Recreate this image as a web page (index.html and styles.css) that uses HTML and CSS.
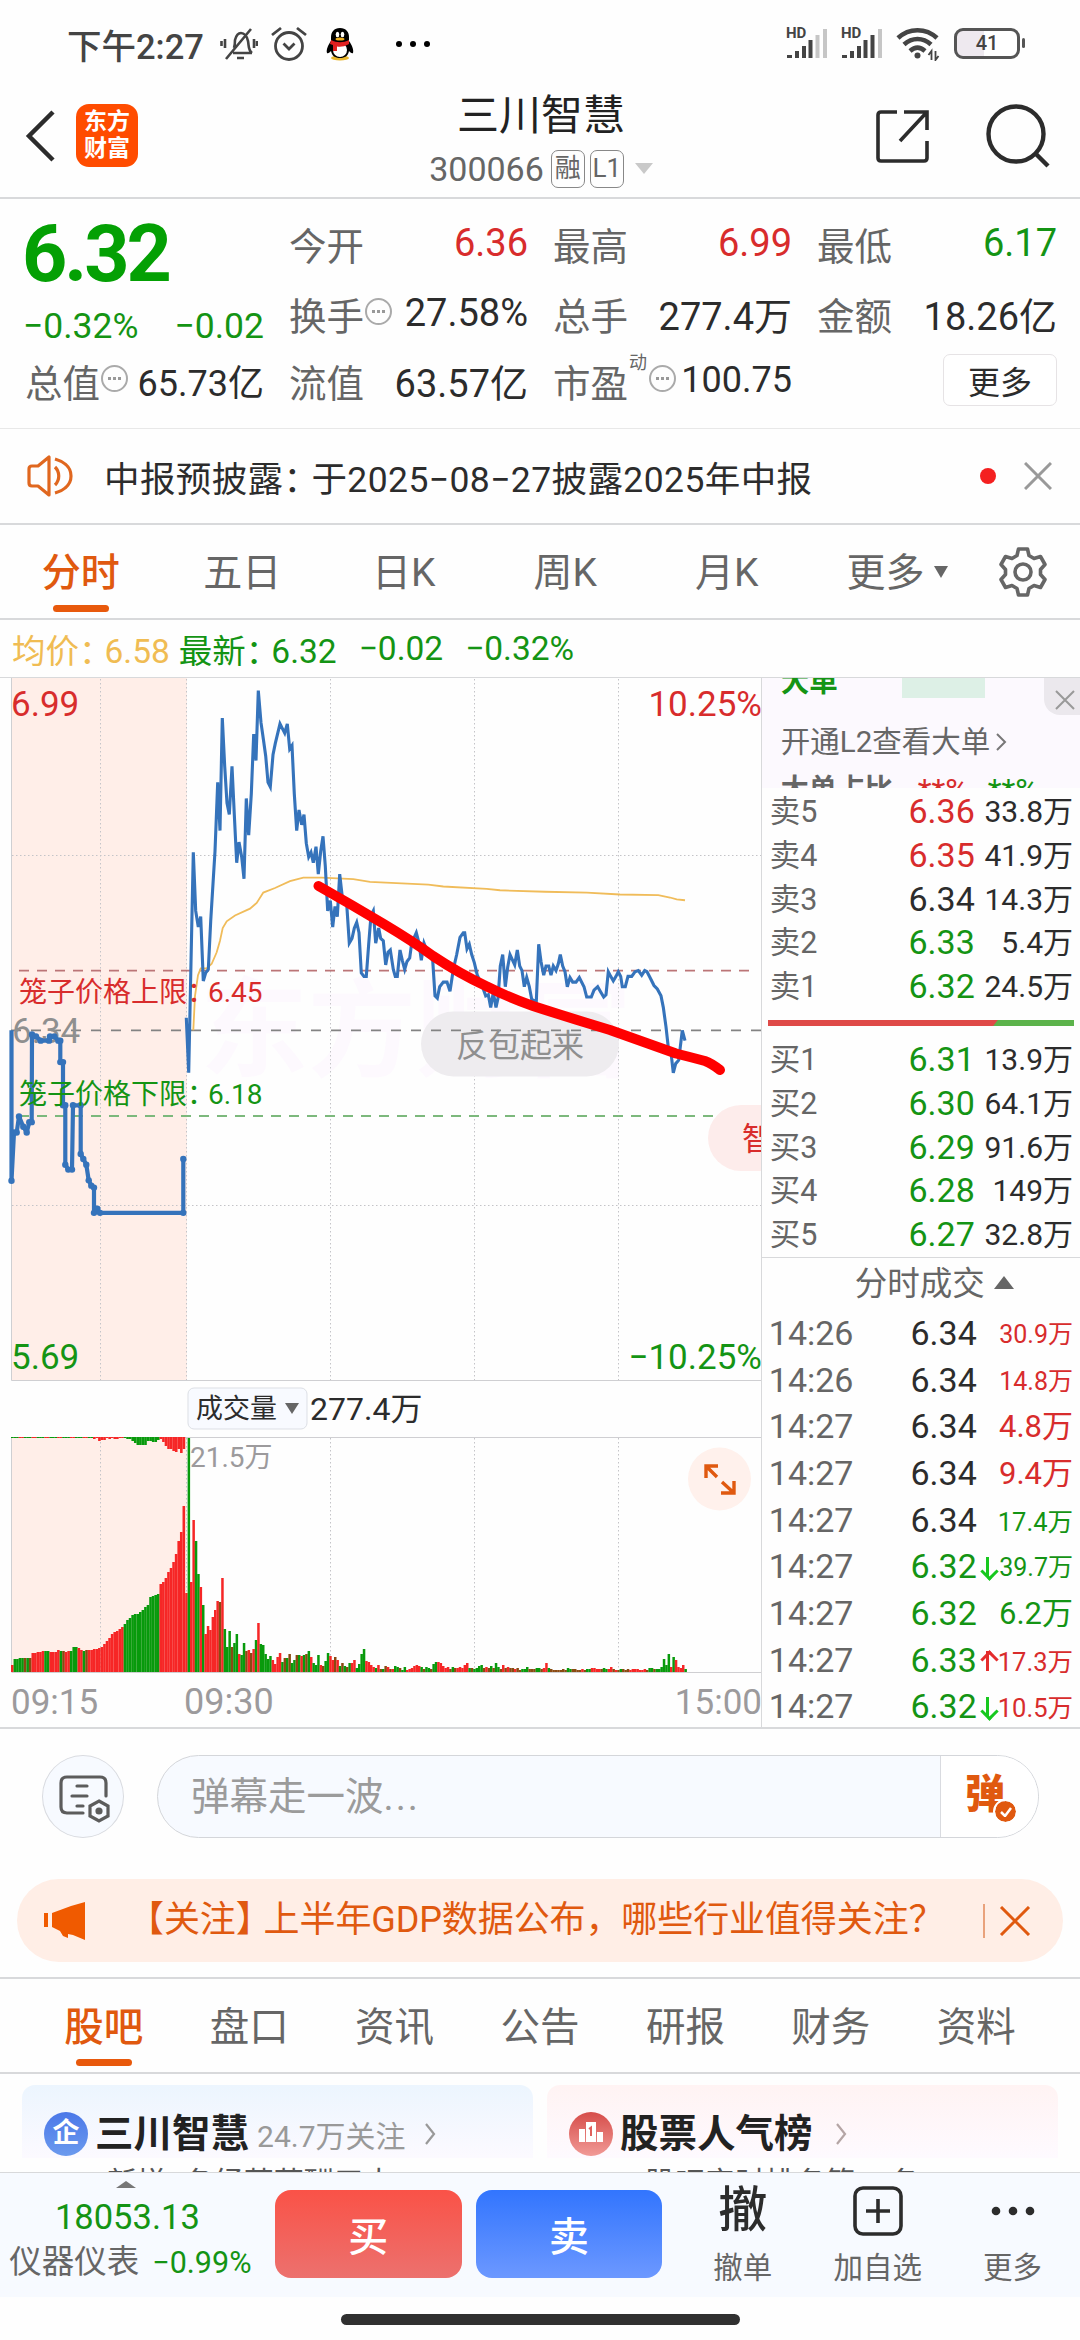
FILE: index.html
```html
<!DOCTYPE html>
<html lang="zh-CN">
<head>
<meta charset="utf-8">
<title>三川智慧 300066</title>
<link rel="stylesheet" href="styles.css">
</head>
<body>

<div class="status">
<span class="time">下午2:27</span>
<svg class="bell" width="38" height="36" viewBox="0 0 38 36" fill="none" stroke="#444" stroke-width="2.6"><path d="M13 27h19M14 22c1-3 1-5 1-8 1-4 3-7 6-7s6 3 7 8c1 5 0 9 4 12M31 3 6 33M5 13v9M1.500 15v5M34 13v9M37 15v5M17 32h7"/></svg>
<svg class="alarm" width="38" height="36" viewBox="0 0 38 36" fill="none" stroke="#444" stroke-width="2.800"><circle cx="19" cy="20" r="13.500"/><path d="M13.500 17.500 19 23l5.500-5.500M2 9l9-7M36 9l-9-7"/></svg>
<svg class="qq" width="28" height="34" viewBox="0 0 28 34"><ellipse cx="14" cy="31" rx="9" ry="2.500" fill="#e8b62d"/><path d="M14 1c-6 0-9 4-9 9v4c-3 4-5 9-4 12 1 1 3-1 4-2 1 5 4 7 9 7s8-2 9-7c1 1 3 3 4 2 1-3-1-8-4-12v-4c0-5-3-9-9-9z" fill="#000"/><ellipse cx="14" cy="23" rx="7" ry="7" fill="#fff"/><path d="M5 13c6 3 12 3 18 0v4c-5 3-9 3-12 2.500V24H7v-6l-3-1z" fill="#e02020"/><ellipse cx="11.500" cy="7.500" rx="1.800" ry="2.700" fill="#fff"/><ellipse cx="16.500" cy="7.500" rx="1.800" ry="2.700" fill="#fff"/><ellipse cx="14" cy="12" rx="4.500" ry="1.600" fill="#f0b020"/></svg>
<svg class="dots" width="36" height="8" viewBox="0 0 36 8"><circle cx="4" cy="4" r="3"/><circle cx="18" cy="4" r="3"/><circle cx="32" cy="4" r="3"/></svg>
<svg class="signal" width="44" height="34" viewBox="0 0 44 34"><text x="0" y="11" class="hd">HD</text><path d="M1 31v-3h5v3zM9 31v-7h4v7zM16 31V19h4v12zM22.500 31V13h4v18z" fill="#444"/><path d="M29.500 31V8h4v23zM37 31V2h4v29z" fill="#c6c6c6"/></svg>
<svg class="signal" width="44" height="34" viewBox="0 0 44 34"><text x="0" y="11" class="hd">HD</text><path d="M1 31v-3h5v3zM9 31v-7h4v7zM16 31V19h4v12zM22.500 31V13h4v18zM29.500 31V8h4v23z" fill="#444"/><path d="M37 31V2h4v29z" fill="#c6c6c6"/></svg>
<svg class="wifi" width="44" height="34" viewBox="0 0 44 34" fill="none" stroke="#444" stroke-width="4.500"><path d="M2 11c11-10.500 28-10.500 39 0M8 17.500c8-7.500 19-7.500 27 0M14 24c5-4.500 10-4.500 15 0"/><circle cx="21.500" cy="28.500" r="3" fill="#444" stroke="none"/><path d="M35.500 33v-9l-3 4M39.500 24v9l3-4" stroke-width="1.800"/></svg>
<div class="battery"><i></i><b>41</b></div>
</div>

<div class="header">
<svg class="back" width="32" height="54" viewBox="0 0 32 54" fill="none" stroke="#2c2c2c" stroke-width="4.500"><path d="M28 3 4 27l24 24"/></svg>
<div class="logo">东方<br>财富</div>
<div class="name">
<h1>三川智慧</h1>
<p><span>300066</span><em class="rong">融</em><em class="lv">L1</em><svg width="18" height="11" viewBox="0 0 18 11"><path d="M0 0h18l-9 11z" fill="#c9c9c9"/></svg></p>
</div>
<svg class="share" width="56" height="56" viewBox="0 0 56 56" fill="none" stroke="#2c2c2c" stroke-width="3.600"><path d="M22 4H6q-3 0-3 3v43q0 3 3 3h43q3 0 3-3V33M29 4h23v18M52 4 25 33"/></svg>
<svg class="search" width="64" height="64" viewBox="0 0 64 64" fill="none" stroke="#2c2c2c" stroke-width="4.400"><circle cx="30" cy="30" r="27.500"/><path d="m49 49 13 13"/></svg>
</div>

<div class="quote">
<div class="price">
<div class="big">6.32</div>
<div class="chg"><span>−0.32%</span><span>−0.02</span></div>
</div>
<div class="cell"><label>今开</label><b class="red">6.36</b></div>
<div class="cell"><label>最高</label><b class="red">6.99</b></div>
<div class="cell"><label>最低</label><b class="green">6.17</b></div>
<div class="cell"><label>换手</label><i class="tip"></i><b>27.58%</b></div>
<div class="cell"><label>总手</label><b>277.4万</b></div>
<div class="cell"><label>金额</label><b>18.26亿</b></div>
<div class="cell small"><label>总值</label><i class="tip"></i><b>65.73亿</b></div>
<div class="cell"><label>流值</label><b>63.57亿</b></div>
<div class="cell small"><label>市盈</label><sup>动</sup><i class="tip"></i><b>100.75</b></div>
<div class="cell"><button class="more">更多</button></div>
</div>

<div class="notice">
<svg width="48" height="44" viewBox="0 0 48 44" fill="none" stroke="#e0671f" stroke-width="3.200" stroke-linejoin="round"><path d="M22 3v38L11 32H5q-3 0-3-3V15q0-3 3-3h6zM28 13c5 5 5 13 0 18"/><path d="M28 5c7 2 16 7 16 17s-9 15-16 17" /></svg>
<span class="text">中报预披露<s>：</s>于2025−08−27披露2025年中报</span>
<i class="dot"></i>
<svg width="28" height="28" viewBox="0 0 28 28" fill="none" stroke="#999" stroke-width="3"><path d="m1 1 26 26M27 1 1 27"/></svg>
</div>

<div class="tabs">
<a class="on">分时</a><a>五日</a><a>日K</a><a>周K</a><a>月K</a>
<a class="drop">更多<svg width="14" height="12" viewBox="0 0 14 12"><path d="M0 0h14L7 12z" fill="#666"/></svg></a>
<svg class="gear" width="50" height="50" viewBox="0 0 50 50" fill="none" stroke="#666" stroke-width="3.600" stroke-linejoin="round"><path d="M20.500 2h9l1.500 6.500 5 3 6.500-2 4.500 8-4.500 5v5l4.500 5-4.500 8-6.500-2-5 3-1.500 6.500h-9L19 41.500l-5-3-6.500 2-4.500-8 4.500-5v-5l-4.500-5 4.500-8 6.500 2 5-3z"/><circle cx="25" cy="25" r="8"/></svg>
</div>

<div class="legend"><span class="avg">均价<s>：</s>6.58</span><span>最新<s>：</s>6.32</span><span>−0.02</span><span>−0.32%</span></div>

<div class="main">
<div class="chart">
<svg width="763" height="1051" viewBox="0 677 763 1051">
<rect x="11" y="677" width="176" height="702" fill="#ffeee8"/>
<rect x="11" y="1437" width="176" height="234" fill="#ffeee8"/>
<text class="water" x="200" y="1067">东方财富</text>
<g class="grid">
<path d="M100.500 678v701M186.500 678v701M330.500 678v701M474.500 678v701M618.500 678v701M12 854.500h750M12 1204.500h750"/>
<path d="M100.500 1437v234M186.500 1437v234M330.500 1437v234M474.500 1437v234M618.500 1437v234"/>
</g>
<path class="frame" d="M11.500 677v702.500H762M11.500 1671V1436.500H762M11.500 1671.500H762"/>
<rect x="421" y="1010.500" width="198" height="65" rx="32.500" fill="#eeecef"/>
<path class="up" d="M19 969.600h731"/>
<path class="down" d="M19 1115h731"/>
<path class="mid" d="M11 1029.300h751"/>
<text class="g30" x="456" y="1056" font-size="32">反包起来</text>
<rect x="708" y="1104" width="120" height="66" rx="33" fill="#fdeceb"/>
<text class="r" x="742" y="1149" font-size="32">智</text>
<text class="g30" x="12" y="1042" font-size="35">6.34</text>

<g transform="translate(0 -99.160) scale(1 1.148)">
<polyline class="line avgline" points="193.300,983 195,953 198,935 200.700,929 206.700,929 211.700,925 216.700,915 220,905 222.700,894 226.700,888 235,883 250,877 256.700,872 263.300,863 275,859 290,853 303.300,850 321.700,850 353.300,851.300 370,853.700 428.300,856 443.300,857.700 486.700,859.700 500,861 545,862.300 586.700,863 620,864.700 658.300,865.300 670,867.300 676.700,869 685,869.700"/>
<polyline class="line" points="186.300,972 188.700,1020 193.300,828 195.700,879 198.300,893 200.700,884 203.300,940 205.700,933 208.300,930 210.700,888 215,827 217.700,767 220,809 222.300,711 224.700,753 227,785 229.300,795 232,753 234.300,795 236.700,837 239,819 241.700,832 244,851 246.300,781 248.700,813 251.300,777 253.700,725 256,748 258.300,687 261,715 263.300,729 265.700,744 268,767 270.300,771 273,743 275.300,733 280,716 282.300,720 284.700,724 287.300,716 289.700,738 292,735 294.300,777 296.700,809 299,791 301.700,804 304,795 306.300,820 308.700,832 311,828 313.300,837 316,823 318.300,847 320.700,827 323,814 325.300,840 327.700,879 330.300,870 332.700,893 335,875 337.300,884 339.700,847 342.300,867 346.700,873 349.300,907 352,903 354.300,894 356.700,889 359,898 361.300,933 364,936 366.300,936 368.700,908 371,883 373.300,879 375.700,907 378.700,894 380.700,903 383.300,905 385.700,926 388,915 390.300,913 393.300,930 395.300,936 397.300,936 400,913 402.300,922 404.700,930 407,923 409.700,920 411.700,907 416.300,898 419,907 421.300,922 424,907 426.700,913 432.700,922 435,953 437.300,955 439.700,945 443.300,941 447,941 450,949 453.300,930 456.700,917 460,902 463.300,898 464.700,898 467,912 469.300,908 471.700,917 474.300,924 477.300,935 481.700,943 485.700,953 488.300,952 490.700,963 493.300,950 496,963 498,955 500.300,927 502.700,917 505.300,945 507.700,928 510,917 514.700,926 517.300,913 519.700,927 522,931 524.300,945 526.700,937 529.300,945 531.700,956 536.300,958 538.700,908 541,923 543.700,935 546,927 548.700,927 551,935 553.300,927 556,931 558.300,925 560.300,917 562.700,927 565,932 567.300,945 570,937 572.700,941 576,941 579.300,937 584,945 586.700,954 591.300,954 594,948 597.700,945 601,950 603.700,954 606,952 608.300,932 610.700,936 613.300,940 616,936 618.300,932 620.700,936 622.300,945 625.300,945 628,936 631.700,936 635,932 638.300,931 641.700,935 644.700,931 647,932 650,937 654,944 657.300,947 661,953 663.300,963 666,980 668.300,998 670.700,1000 673.300,1020 675.700,1012 678.700,1009 682.300,983 685,992"/>
<polyline class="line pre" points="11.500,983 11.500,1114 14,1072 16.700,1072 19,1058 23.300,1067 26.700,1072 29.300,1063 31.700,1063 32,986.700 36,988.300 40.700,992 49,992 50,988.300 54.300,988.300 58.300,992 60.300,992 60.300,1010.700 63,1010.700 63,1048.300 65.300,1048.300 65.300,1100 68.300,1104.300 72,1104.300 73,1048.300 80.700,1048.300 80.700,1090.700 83.300,1095 86.300,1100 88.700,1113.700 91.300,1118.300 94,1120 94,1142 97.300,1138.300 100,1142 183.300,1142 183.300,1095"/>
</g>
<g id="dots"></g>
<path d="M318.500 885Q352 904 383 922.500T433 955Q460 973 487 985.500Q510 997 533 1005Q570 1017 610 1029L676 1052.500Q690 1056 705 1060Q711 1062 720 1069" fill="none" stroke="#f00" stroke-width="10" stroke-linecap="round" stroke-linejoin="round"/>

<text class="r" x="11" y="715" font-size="35">6.99</text>
<text class="r end" x="762" y="715" font-size="35">10.25%</text>
<text class="gr" x="11" y="1368" font-size="35">5.69</text>
<text class="gr end" x="762" y="1368" font-size="35">−10.25%</text>
<text class="r" x="19" y="1001" font-size="28">笼子价格上限：<tspan x="208">6.45</tspan></text>
<text class="gr" x="19" y="1103" font-size="28">笼子价格下限：<tspan x="208">6.18</tspan></text>

<rect x="188" y="1387" width="119" height="41" rx="6" fill="#f8faff" stroke="#dcdfe5"/>
<text class="dk" x="196" y="1417" font-size="27">成交量</text>
<path d="M285 1402h14l-7 11z" fill="#666"/>
<text class="dk" x="310" y="1419" font-size="32">277.4万</text>

<g id="bars"></g>
<text class="g20" x="190" y="1466" font-size="28">21.5万</text>
<circle cx="719.500" cy="1478" r="31.500" fill="#fff1ec"/>
<path d="M706 1477v-12h12M706 1465l11 11M734 1480v12h-13M734 1492l-12-11" fill="none" stroke="#e0590f" stroke-width="3.400"/>
<text class="g20" x="11" y="1713" font-size="35">09:15</text>
<text class="g20" x="184" y="1713" font-size="36">09:30</text>
<text class="g20 end" x="762" y="1713" font-size="35">15:00</text>
</svg>
</div>

<div class="side">
<div class="l2">
<div class="l2-top"><b>大单</b><i></i></div>
<div class="l2-open">开通L2查看大单<svg width="11" height="18" viewBox="0 0 11 18" fill="none" stroke="#777" stroke-width="2"><path d="m1 1 8 8-8 8"/></svg></div>
<div class="l2-pct"><b>大单占比</b><span class="red">**%</span><span class="green">**%</span></div>
<div class="l2-x"><svg width="20" height="20" viewBox="0 0 20 20" fill="none" stroke="#999" stroke-width="2"><path d="m1 1 18 18M19 1 1 19"/></svg></div>
</div>
<ul class="book">
<li><span>卖5</span><b class="red">6.36</b><em>33.8万</em></li>
<li><span>卖4</span><b class="red">6.35</b><em>41.9万</em></li>
<li><span>卖3</span><b>6.34</b><em>14.3万</em></li>
<li><span>卖2</span><b class="green">6.33</b><em>5.4万</em></li>
<li><span>卖1</span><b class="green">6.32</b><em>24.5万</em></li>
</ul>
<div class="ratio"><i></i></div>
<ul class="book buys">
<li><span>买1</span><b class="green">6.31</b><em>13.9万</em></li>
<li><span>买2</span><b class="green">6.30</b><em>64.1万</em></li>
<li><span>买3</span><b class="green">6.29</b><em>91.6万</em></li>
<li><span>买4</span><b class="green">6.28</b><em>149万</em></li>
<li><span>买5</span><b class="green">6.27</b><em>32.8万</em></li>
</ul>
<div class="deals-title">分时成交<svg width="20" height="13" viewBox="0 0 20 13"><path d="M10 0 20 13H0z" fill="#666"/></svg></div>
<ul class="deals">
<li><span>14:26</span><b>6.34</b><i></i><em class="red">30.9万</em></li>
<li><span>14:26</span><b>6.34</b><i></i><em class="red">14.8万</em></li>
<li><span>14:27</span><b>6.34</b><i></i><em class="red l">4.8万</em></li>
<li><span>14:27</span><b>6.34</b><i></i><em class="red l">9.4万</em></li>
<li><span>14:27</span><b>6.34</b><i></i><em class="green m">17.4万</em></li>
<li><span>14:27</span><b class="green">6.32</b><i class="dn"></i><em class="green">39.7万</em></li>
<li><span>14:27</span><b class="green">6.32</b><i></i><em class="green l">6.2万</em></li>
<li><span>14:27</span><b class="green">6.33</b><i class="upw"></i><em class="red m">17.3万</em></li>
<li><span>14:27</span><b class="green">6.32</b><i class="dn"></i><em class="red m">10.5万</em></li>
</ul>
</div>
</div>

<div class="danmu">
<div class="set"><svg width="52" height="50" viewBox="0 0 52 50" fill="none" stroke="#5c5c5c" stroke-width="3.200" stroke-linecap="round"><path d="M25 39H9q-6 0-6-6V9q0-6 6-6h33q6 0 6 6v13M19 12h10M14 22h15M19 32h6"/><path d="m41 27 9 5v10l-9 5-9-5V32z"/><circle cx="41" cy="37" r="2" fill="#5c5c5c"/></svg></div>
<div class="input"><span>弹幕走一波<q>...</q></span><div class="send">弹<i><svg width="12" height="10" viewBox="0 0 12 10" fill="none" stroke="#fff" stroke-width="2.500"><path d="m1 5 4 4 6-8"/></svg></i></div></div>
</div>

<div class="banner">
<svg width="44" height="38" viewBox="0 0 44 38" fill="#f05a00"><path d="M0 11h4v14H0zM8 11l19-7 14-4v38l-12-5-5-1v4l-5-2-3-5-8-4z"/></svg>
<span>【关注<s>】</s>上半年GDP数据公布，哪些行业值得关注？</span>
<i></i>
<svg class="x" width="32" height="30" viewBox="0 0 32 30" fill="none" stroke="#e0590f" stroke-width="3"><path d="m2 1 28 28M30 1 2 29"/></svg>
</div>

<div class="tabs2"><a class="on">股吧</a><a>盘口</a><a>资讯</a><a>公告</a><a>研报</a><a>财务</a><a>资料</a></div>

<div class="cards">
<div class="card blue">
<div class="hd-row"><span class="ico">企</span><b>三川智慧</b><small>24.7万关注</small><svg width="12" height="22" viewBox="0 0 12 22" fill="none" stroke="#999" stroke-width="2.200"><path d="m2 1 8 10-8 10"/></svg></div>
<p>新增<u>1</u>条经营薪酬三大</p>
</div>
<div class="card pink">
<div class="hd-row"><span class="ico"><svg width="26" height="24" viewBox="0 0 26 24"><path d="M1 9h6v13H1zM8 2h10v20H8zM19 12h6v10h-6z" fill="#fff"/><path d="M11 9l2-1.500V16" stroke="#e0605c" stroke-width="2" fill="none"/></svg></span><b>股票人气榜</b><svg class="far" width="12" height="22" viewBox="0 0 12 22" fill="none" stroke="#b5a5a5" stroke-width="2.200"><path d="m2 1 8 10-8 10"/></svg></div>
<p class="in">股吧实时排名第<u>13</u>名</p>
</div>
</div>

<div class="bottom">
<div class="index">
<svg width="20" height="7" viewBox="0 0 20 7"><path d="M10 0 20 7H0z" fill="#777"/></svg>
<b>18053.13</b>
<p>仪器仪表<span>−0.99%</span></p>
</div>
<button class="buy">买</button>
<button class="sell">卖</button>
<div class="act first"><strong>撤</strong><span>撤单</span></div>
<div class="act"><strong><svg width="50" height="50" viewBox="0 0 50 50" fill="none" stroke="#2c2c2c" stroke-width="3.600"><rect x="2" y="2" width="46" height="46" rx="8"/><path d="M25 13v24M13 25h24"/></svg></strong><span>加自选</span></div>
<div class="act last"><strong><svg width="44" height="10" viewBox="0 0 44 10" fill="#2c2c2c"><circle cx="5" cy="5" r="4.300"/><circle cx="22" cy="5" r="4.300"/><circle cx="39" cy="5" r="4.300"/></svg></strong><span>更多</span></div>
</div>
<div class="home"><i></i></div>

<script src="script.js"></script>
</body>
</html>
```
FILE: styles.css
```css
* {
box-sizing: border-box;
}

body {
margin: 0;
width: 1080px;
height: 2340px;
overflow: hidden;
background: #fefefe;
color: #2c2c2c;
font-family: Roboto, "Noto Sans CJK SC", sans-serif;
}

h1, p, ul {
margin: 0;
padding: 0;
font-weight: normal;
}

li { list-style: none; }
b, em, i { font-weight: normal; font-style: normal; }
u { text-decoration: none; color: #e8590c; }
s { text-decoration: none; margin-right: -8px; }
q { letter-spacing: 2px; }
q::before, q::after { content: none; }
svg { flex: none; }
button { border: 0; font-family: inherit; padding: 0; }

.red { color: #d82c2c; }
.green { color: #149414; }

.status {
height: 84px;
padding: 3px 60px 0 67px;
display: flex;
align-items: center;
}
.time {
font-size: 34.500px;
font-weight: 500;
color: #444;
width: 153px;
white-space: nowrap;
}
.bell { margin-right: 12px; }
.alarm { margin-right: 18px; }
.qq { margin-right: 41px; }
.dots { margin-right: auto; }
.signal { margin-right: 11px; overflow: visible; }
.wifi { margin-right: 14px; }
.hd { font-size: 15px; font-weight: 700; fill: #444; }
.battery {
width: 66px;
height: 31px;
border: 3.5px solid #555;
border-radius: 9px;
position: relative;
background: linear-gradient(90deg, #eee9ef 45%, #fff 45%);
text-align: center;
line-height: 24px;
}
.battery b { font-size: 20px; font-weight: 500; color: #444; }
.battery i {
position: absolute;
right: -8px;
top: 7px;
width: 3px;
height: 10px;
border-radius: 2px;
background: #555;
}

.header {
height: 115px;
border-bottom: 2px solid #d8d9db;
display: flex;
align-items: center;
padding: 0 30px 10px 25px;
}
.logo {
width: 62px;
height: 63px;
margin-left: 19px;
border-radius: 13px;
background: #ff4c00;
color: #fff;
font-size: 23px;
line-height: 27px;
font-weight: 700;
text-align: center;
padding-top: 4px;
}
.name {
flex: 1;
text-align: center;
padding-left: 69px;
padding-top: 8px;
}
.name h1 { font-size: 42px; line-height: 52px; padding-top: 2px; font-weight: 400; color: #222; }
.name p {
display: flex;
justify-content: center;
align-items: center;
font-size: 34px;
line-height: 46px;
color: #666;
padding-top: 4px;
}
.name em {
border: 1.5px solid #888;
border-radius: 7px;
height: 38px;
line-height: 34px;
font-size: 26px;
width: 34px;
margin-left: 7px;
}
.name em.lv { margin-left: 5px; }
.name p svg { margin-left: 11px; }
.share { margin-right: 55px; }

.quote {
height: 230px;
border-bottom: 1.5px solid #e8e8e8;
padding: 11px 22px 0 25px;
display: grid;
grid-template-columns: 239px 239px 239px 240px;
grid-template-rows: 66px 74px 60px;
column-gap: 25px;
}
.price { grid-row: 1 / 3; color: #04a004; }
.big {
font-size: 79px;
line-height: 88px;
font-weight: 700;
letter-spacing: -3px;
margin-left: -3px;
}
.chg {
display: flex;
justify-content: space-between;
font-size: 35.500px;
line-height: 56px;
color: #149414;
margin-left: -2px;
}
.cell {
display: flex;
align-items: center;
font-size: 38px;
white-space: nowrap;
}
.cell label { font-size: 37.500px; color: #666; }
.cell b { margin-left: auto; }
.cell.small b { font-size: 36px; }
.cell sup { font-size: 18px; color: #666; margin: -38px 1px 0 1px; }
.tip {
width: 27px;
height: 27px;
border: 2px solid #aaa;
border-radius: 50%;
display: flex;
align-items: center;
justify-content: center;
margin: -4px 0 0 1px;
}
.tip::before {
content: "";
width: 3px;
height: 3px;
background: #999;
box-shadow: -5px 0 #999, 5px 0 #999;
}
.more {
margin-left: auto;
width: 114px;
height: 52px;
border: 1.5px solid #e6e3e5;
border-radius: 7px;
background: #fff;
font-size: 32px;
color: #2c2c2c;
}

.notice {
height: 96px;
border-bottom: 2px solid #d8d9db;
display: flex;
align-items: center;
padding: 0 28px 0 27px;
}
.notice .text { font-size: 35.500px; margin-left: 29px; letter-spacing: 0.400px; }
.notice .dot {
width: 16px;
height: 16px;
border-radius: 50%;
background: #f42020;
margin: 0 28px 0 auto;
}

.tabs {
height: 95px;
border-bottom: 2px solid #d8d9db;
display: flex;
align-items: center;
font-size: 39px;
color: #666;
}
.tabs a {
width: 161.500px;
height: 100%;
line-height: 97px;
text-align: center;
position: relative;
}
.tabs a.drop { text-align: left; padding-left: 39px; width: 190px; white-space: nowrap; }
.drop svg { margin-left: 9px; vertical-align: 8px; }
.on { color: #e0590f; font-weight: 500; }
.tabs .on::after, .tabs2 .on::after {
content: "";
position: absolute;
left: 50%;
margin-left: -28px;
bottom: 6px;
width: 56px;
height: 7px;
border-radius: 4px;
background: #e8590c;
}

.legend {
height: 58px;
border-bottom: 1.5px solid #d8d9db;
padding-left: 12px;
display: flex;
align-items: center;
font-size: 33.500px;
color: #149414;
}
.legend span { margin-right: 22px; }
.legend .avg { color: #f0bc53; margin-right: 9px; }

.main {
height: 1051px;
display: flex;
border-bottom: 2px solid #d8d9db;
}
.chart { width: 763px; height: 1049px; overflow: hidden; }
.chart svg { display: block; }
.grid path { stroke: #c4c4c8; stroke-width: 1; stroke-dasharray: 1.500 2.500; fill: none; }
.frame { stroke: #cfcfd2; fill: none; }
.up, .down, .mid { stroke-width: 1.800; fill: none; }
.up { stroke: #bb7577; stroke-dasharray: 10 8; }
.down { stroke: #7cb87c; stroke-dasharray: 10 8; }
.mid { stroke: #838383; stroke-dasharray: 10 10; }
.line { fill: none; stroke: #3573bb; stroke-width: 3.100; vector-effect: non-scaling-stroke; }
.avgline { stroke: #f0bc5a; stroke-width: 1.800; }
.pre { stroke-width: 4.200; stroke-linejoin: round; }
.r { fill: #d82c2c; }
.gr { fill: #149414; }
.g30 { fill: #8f8f8f; }
.g20 { fill: #9c9a9c; }
.dk { fill: #2c2c2c; }
.end { text-anchor: end; }
.water { font-size: 108px; font-weight: 700; fill: #fdf9fe; }

.side {
flex: 1;
border-left: 1.5px solid #d8d9db;
}
.l2 {
height: 110px;
background: #fcf9fe;
overflow: hidden;
position: relative;
padding-left: 19px;
color: #666;
font-size: 29.500px;
}
.l2-top { display: flex; height: 42px; }
.l2-top b { color: #149414; font-weight: 700; font-size: 28.500px; line-height: 10px; }
.l2-top i { margin-left: 64px; width: 83px; height: 20px; background: #ddf0e6; }
.l2-open { display: flex; align-items: center; line-height: 44px; white-space: nowrap; }
.l2-open svg { margin-left: 6px; }
.l2-pct { display: flex; line-height: 52px; font-size: 28px; white-space: nowrap; }
.l2-pct b { font-weight: 700; width: 137px; }
.l2-pct span { width: 70px; font-size: 32px; }
.l2-x {
position: absolute;
top: 0;
right: 0;
width: 36px;
height: 37px;
border-radius: 0 0 0 16px;
background: #ebe8ed;
padding: 5px 0 0 11px;
}
.book { padding: 2px 7px 0 8px; }
.book li {
height: 43.800px;
line-height: 43.800px;
display: flex;
font-size: 30.500px;
white-space: nowrap;
}
.book span { color: #666; width: 50px; }
.book b { width: 155px; text-align: right; font-size: 34px; }
.book em { flex: 1; text-align: right; font-size: 30px; }
.ratio {
height: 6px;
margin: 11px 6px 0 6px;
background: #5cb34b;
}
.ratio i {
display: block;
height: 6px;
width: 230px;
background: #df4a48;
clip-path: polygon(0 0, 100% 0, 98% 100%, 0 100%);
}
.buys { padding-top: 12px; height: 232px; border-bottom: 1.5px solid #d8d9db; }
.deals-title {
height: 52px;
line-height: 52px;
font-size: 32.500px;
color: #666;
padding-left: 93px;
}
.deals-title svg { margin-left: 9px; vertical-align: 6px; }
.deals li {
height: 46.700px;
line-height: 46.700px;
display: flex;
padding: 0 7px 0 7px;
font-size: 34px;
white-space: nowrap;
}
.deals span { color: #666; width: 90px; }
.deals b { width: 118px; text-align: right; }
.deals i { width: 21px; margin: 14px 0 0 0; height: 20px; position: relative; }
.deals em { flex: 1; text-align: right; font-size: 25px; padding-top: 2px; }
.deals em.m { font-size: 25.500px; }
.deals em.l { font-size: 31px; padding-top: 1px; }
.dn::before, .upw::before {
content: "";
position: absolute;
left: 9.500px;
width: 3px;
height: 20px;
background: #17c81f;
}
.dn::after, .upw::after {
content: "";
position: absolute;
left: 6px;
top: 8px;
width: 10px;
height: 10px;
border: solid #17c81f;
border-width: 0 3px 3px 0;
transform: rotate(45deg);
}
.upw::before { background: #e42c2c; }
.upw::after { border-color: #e42c2c; top: 2px; border-width: 3px 0 0 3px; }

.danmu {
height: 109px;
padding: 26px 41px 0 42px;
display: flex;
}
.set {
width: 82px;
height: 83px;
border: 1.5px solid #d9dbe0;
border-radius: 50%;
background: #f7faff;
padding: 18px 0 0 15px;
}
.input {
margin-left: 33px;
flex: 1;
height: 83px;
border: 1.5px solid #d4d6da;
border-radius: 42px;
background: #f7faff;
display: flex;
overflow: hidden;
font-size: 38.500px;
line-height: 82px;
color: #9b9b9b;
padding-left: 33px;
}
.send {
margin-left: auto;
width: 98px;
border-left: 1.5px solid #d9dbe0;
background: #fff;
color: #e0590f;
font-weight: 900;
font-size: 40px;
padding-left: 24px;
position: relative;
line-height: 78px;
}
.send i {
position: absolute;
left: 54px;
top: 45px;
width: 21px;
height: 21px;
border-radius: 50%;
background: #e0590f;
outline: 2px solid #fff;
display: flex;
align-items: center;
justify-content: center;
}

.banner {
margin: 41px 17px 0;
height: 83px;
border-radius: 42px;
background: #ffeee6;
color: #e0590f;
display: flex;
align-items: center;
padding-left: 27px;
font-size: 36px;
}
.banner span { margin-left: 40px; width: 832px; white-space: nowrap; letter-spacing: -0.100px; line-height: 80px; padding-bottom: 2px; }
.banner i { width: 1.500px; height: 34px; background: #e9a27c; margin: 0 14px 0 23px; }

.tabs2 {
margin-top: 15px;
height: 97px;
border-top: 2px solid #d8d9db;
border-bottom: 2px solid #d8d9db;
display: flex;
padding: 0 31px;
font-size: 39.500px;
line-height: 98px;
color: #666;
}
.tabs2 a { flex: 1; text-align: center; position: relative; }

.cards {
height: 98px;
overflow: hidden;
display: flex;
gap: 14px;
padding: 11px 22px 0;
}
.card { flex: 1; font-size: 30px; color: #555; }
.hd-row {
height: 73px;
border-radius: 13px 13px 0 0;
display: flex;
align-items: center;
padding: 24px 0 0 22px;
white-space: nowrap;
}
.blue .hd-row { background: linear-gradient(#ecf5fe, #fcfaff); }
.pink .hd-row { background: linear-gradient(#fff3f3, #fefaff); }
.hd-row b { font-size: 38.500px; line-height: 40px; font-weight: 700; color: #222; margin-left: 7px; }
.hd-row small { font-size: 30px; color: #999; margin: 0 18px 0 8px; }
.far { margin-left: 22px; }
.ico {
width: 44px;
height: 44px;
border-radius: 50%;
background: linear-gradient(#4b78e8, #6b9aee);
color: #fff;
font-size: 27px;
font-weight: 700;
line-height: 42px;
text-align: center;
}
.pink .ico { background: linear-gradient(#d64d4a, #f19a96); padding-top: 2px; }
.card p { padding: 9px 0 0 85px; line-height: 32px; }
.card p.in { padding-left: 98px; }

.bottom {
height: 125px;
border-top: 1.5px solid #d8d9db;
background: #f7faff;
display: flex;
}
.index {
width: 261px;
text-align: center;
padding: 8px 0 0 0;
line-height: 0;
white-space: nowrap;
}
.index b { display: block; font-size: 34.500px; line-height: 46px; color: #149414; margin-top: 6px; padding-right: 6px; }
.index p { font-size: 32.500px; line-height: 46px; color: #666; margin-top: -1px; }
.index svg { margin-right: 9px; }
.index p span { color: #149414; font-size: 30.500px; margin-left: 13px; }
.buy, .sell {
width: 187px;
height: 88px;
margin: 17px 0 0 14px;
border-radius: 16px;
color: #fff;
font-size: 40px;
font-weight: 500;
}
.buy { background: linear-gradient(#fa5247, #ec716e); }
.sell { background: linear-gradient(#3275fe, #6c98ff); }
.act { width: 135px; text-align: center; display: flex; flex-direction: column; }
.act.first { margin-left: 13px; }
.act strong {
height: 76px;
font-size: 49px;
font-weight: 500;
line-height: 78px;
display: flex;
justify-content: center;
align-items: center;
}
.act span { font-size: 29.500px; line-height: 38px; color: #666; }

.home { height: 44px; display: flex; justify-content: center; padding-top: 17px; }
.home i { width: 399px; height: 11px; border-radius: 6px; background: #303030; }
```
FILE: script.js
```js
var NS = "http://www.w3.org/2000/svg";
var bars = document.getElementById("bars");
var dots = document.getElementById("dots");
var color = { r: "#f62626", g: "#089a0c", m: "#8a4a12" };

function addBar(x, y, w, h, c) {
var el = document.createElementNS(NS, "rect");
el.setAttribute("x", x);
el.setAttribute("y", y);
el.setAttribute("width", w);
el.setAttribute("height", h);
el.setAttribute("fill", color[c]);
bars.appendChild(el);
}

// call auction: matched volume at the bottom, unmatched hanging from the top
var pre = "r7 g13 g13 g14 g14 m14 g14 m14 r19 r19 r20 r20 r21 g21 g21 r20 r20 r20 r22 g21 m21 r20 r21 g21 g25 g25 r24 r22 g21 m22 r22 r22 r23 r23 r24 r25 r28 r31 r34 r38 r40 r41 r43 r45 g48 g52 g54 g57 g58 g58 g60 g62 g65 g67 g75 g76 g77 g78 r88 r90 r94 r100 r104 r110 r118 r131 r140 r166".split(" ");
var preTop = "r2 r1 r4 r3 r3 r1 r2 r1 r2 r2 r1 r1 g1 g2 g2 g4 g6 g8 g8 g8 g8 g4 g4 g5 g5 g3 r2 r5 r9 r12 r12 r14 r15 r12 r16 r12".split(" ");

pre.forEach(function (v, i) {
var h = +v.slice(1);
addBar(11 + i * 2.56, 1671 - h, 2.6, h, v[0]);
});
for (var i = 0; i < 32; i++) addBar(11 + i * 2.56, 1436, 2.6, 1, i % 5 < 3 ? "g" : "r");
preTop.forEach(function (v, i) {
addBar(93 + i * 2.56, 1436, 2.6, +v.slice(1), v[0]);
});

// one bar a minute from 09:30
var vol = ("r79 g234 r90 r152 g131 g98 r85 g67 r38 r46 r42 r55 r62 r71 m70 r94 g43 g25 g41 m25 g29 g38 r18 g17 g29 m21 r22 m19 r23 g32 r49 g28 g27 g18 g13 g16 r12 r8 r15 r19 g10 m14 g14 m18 g9 g12 m17 g17 r16 g17 m18 g21 r15 g9 g7 g17 r7 m6 g11 g19 r16 r12 m15 r12 g6 m9 g6 m5 g9 r9 r12 g4 g8 g18 g23 r11 r10 r7 r5 g4 r7 m3 g3 m6 r5 m3 r3 g6 g5 m4 g2 g5 r2 r3 r4 r6 r7 r6 " +
"g5 m3 g5 g4 m3 g8 g10 r10 r9 r6 r4 r5 m3 g5 m4 r4 r5 r4 r7 r9 g4 m4 g3 g4 g6 g7 m4 r5 m4 g6 m4 g9 g5 m3 r7 m4 r5 m4 m4 r3 m4 m2 g3 g3 g5 m3 m3 m3 g4 g4 m3 r4 r9 g4 m3 m2 m2 m2 m2 m3 m2 g4 g3 m3 m3 m2 m2 r3 m2 g3 g3 r4 r4 r3 r3 m3 g4 g3 r3 r5 m3 r2 m2 g3 m3 m2 m3 r2 r3 r3 r3 r2 r2 r3 m2 g4 g4 m3 g3 g3 g5 g13 g7 g18 r5 g15 r12 r5 r4 r7 g3").split(" ");
vol.forEach(function (v, i) {
var h = +v.slice(1);
addBar(185.2 + i * 2.4, 1671 - h, 2.5, h, v[0]);
});

// markers on the call auction line
document.querySelector(".pre").getAttribute("points").split(" ").forEach(function (p, i) {
if (i == 0) return;
var xy = p.split(",");
var c = document.createElementNS(NS, "circle");
c.setAttribute("cx", xy[0]);
c.setAttribute("cy", xy[1] * 1.148 - 99.16);
c.setAttribute("r", 3.2);
c.setAttribute("fill", "#3573bb");
dots.appendChild(c);
});
```
